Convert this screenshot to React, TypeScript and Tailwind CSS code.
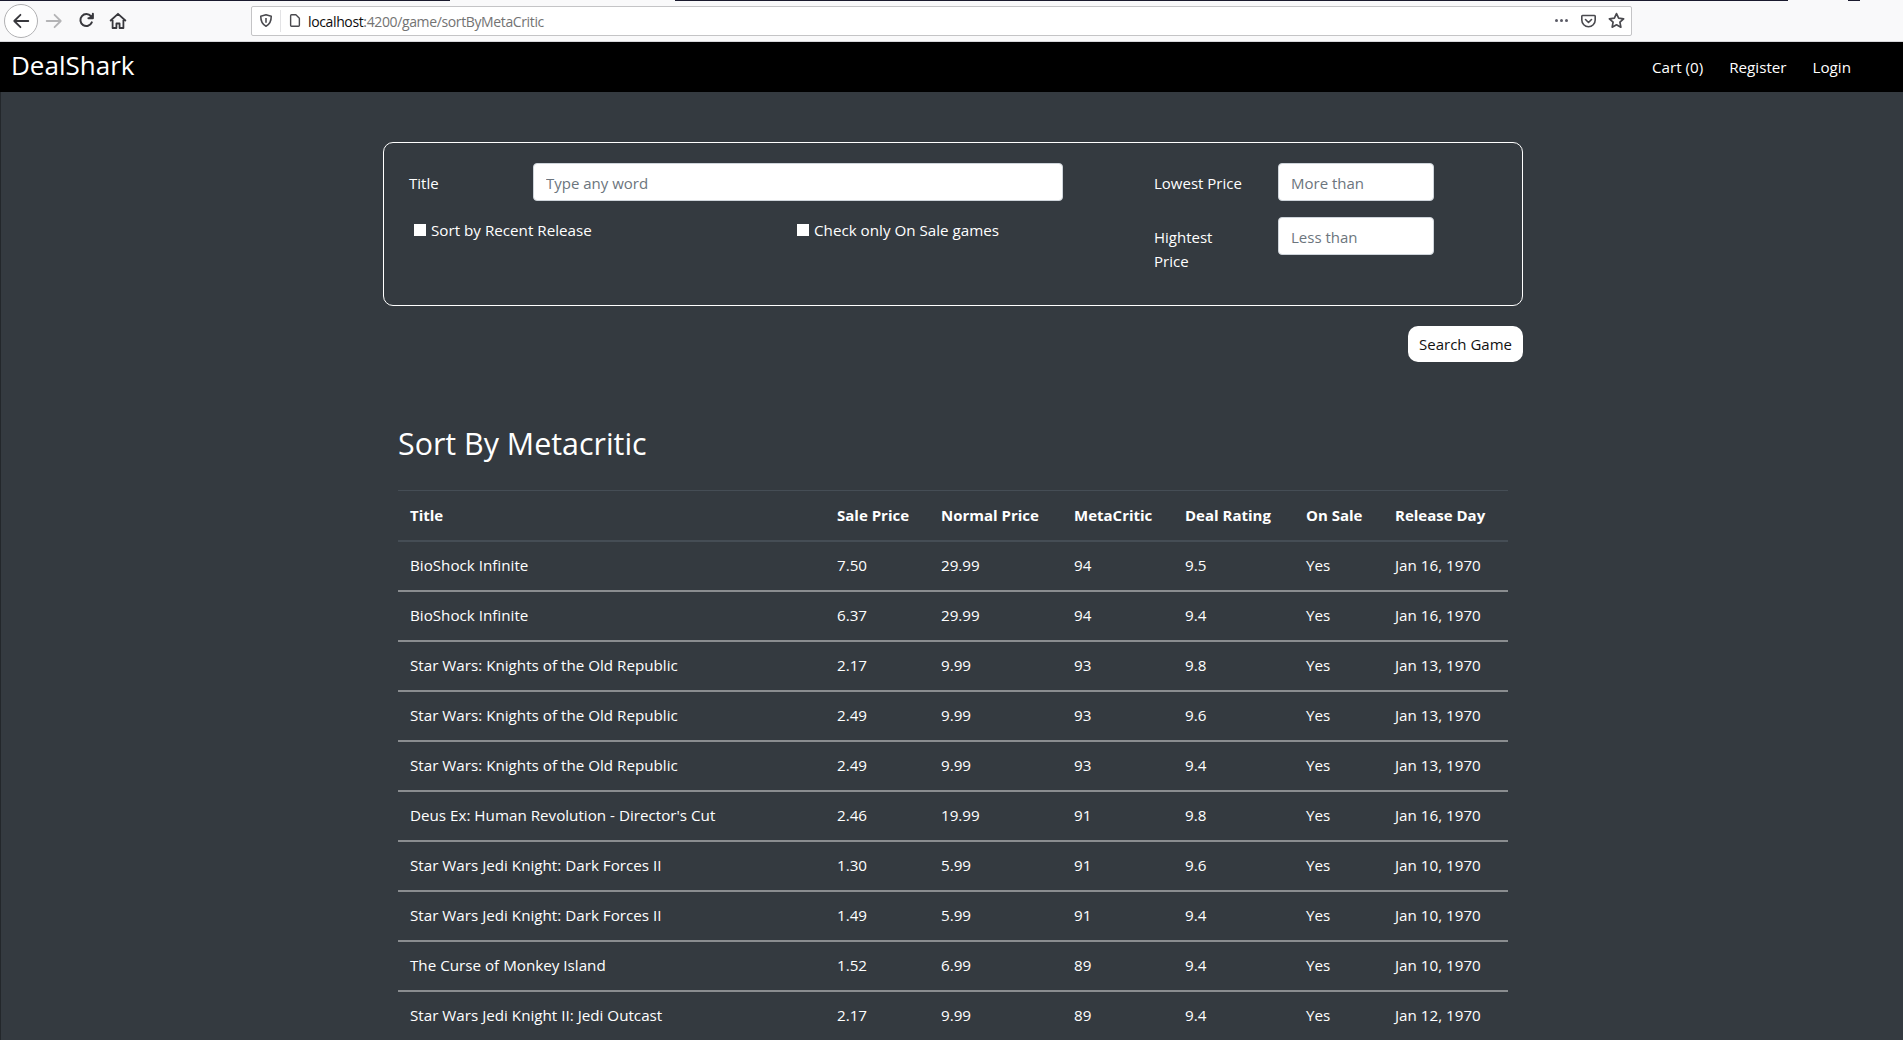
const columns = ["Title", "Sale Price", "Normal Price", "MetaCritic", "Deal Rating", "On Sale", "Release Day"];

const games = [
  ["BioShock Infinite", "7.50", "29.99", "94", "9.5", "Yes", "Jan 16, 1970"],
  ["BioShock Infinite", "6.37", "29.99", "94", "9.4", "Yes", "Jan 16, 1970"],
  ["Star Wars: Knights of the Old Republic", "2.17", "9.99", "93", "9.8", "Yes", "Jan 13, 1970"],
  ["Star Wars: Knights of the Old Republic", "2.49", "9.99", "93", "9.6", "Yes", "Jan 13, 1970"],
  ["Star Wars: Knights of the Old Republic", "2.49", "9.99", "93", "9.4", "Yes", "Jan 13, 1970"],
  ["Deus Ex: Human Revolution - Director's Cut", "2.46", "19.99", "91", "9.8", "Yes", "Jan 16, 1970"],
  ["Star Wars Jedi Knight: Dark Forces II", "1.30", "5.99", "91", "9.6", "Yes", "Jan 10, 1970"],
  ["Star Wars Jedi Knight: Dark Forces II", "1.49", "5.99", "91", "9.4", "Yes", "Jan 10, 1970"],
  ["The Curse of Monkey Island", "1.52", "6.99", "89", "9.4", "Yes", "Jan 10, 1970"],
  ["Star Wars Jedi Knight II: Jedi Outcast", "2.17", "9.99", "89", "9.4", "Yes", "Jan 12, 1970"],
];

function BrowserBar() {
  return (
    <div className="h-[42px] bg-[#f9f9fa] border-b border-[#d7d7db] flex items-center relative shrink-0">
      {/* window edge showing above the toolbar */}
      <div className="absolute top-0 left-0 w-[450px] h-px bg-[#1a1a2e]" />
      <div className="absolute top-0 left-[675px] w-[1113px] h-px bg-[#1a1a2e]" />
      <div className="absolute top-0 left-[1848px] w-3 h-px bg-[#1a1a2e]" />

      <div className="ml-1 w-[34px] h-[34px] rounded-full border border-[#b1b1b3] bg-white flex items-center justify-center">
        <svg width="18" height="18" viewBox="0 0 16 16" fill="none" stroke="#38383d" strokeWidth="1.6" strokeLinecap="round" strokeLinejoin="round">
          <path d="M14.5 8H2M7.5 2.5 2 8l5.5 5.5" />
        </svg>
      </div>
      <svg className="ml-[7px]" width="18" height="18" viewBox="0 0 16 16" fill="none" stroke="#b4b4b6" strokeWidth="1.6" strokeLinecap="round" strokeLinejoin="round">
        <path d="M1.5 8H14M8.5 2.5 14 8l-5.5 5.5" />
      </svg>
      <svg className="ml-[15px]" width="17" height="17" viewBox="0 0 16 16" fill="none" stroke="#38383d" strokeWidth="1.9" strokeLinecap="round" strokeLinejoin="round">
        <path d="M13 9.8A5.6 5.6 0 1 1 12.2 4" />
        <path d="M14 1.6v4.2H9.8" fill="#38383d" />
      </svg>
      <svg className="ml-[14px]" width="18" height="18" viewBox="0 0 16 16" fill="none" stroke="#38383d" strokeWidth="1.6" strokeLinejoin="round">
        <path d="M1 8 8 1.6 15 8M3.2 7v7.2h3.4v-4h2.8v4h3.4V7" />
      </svg>

      <div className="ml-[124px] w-[1381px] h-[30px] bg-white border border-[#c4c4c6] rounded-[2px] flex items-center font-['Open_Sans',sans-serif]">
        <svg className="ml-[7px]" width="14" height="15" viewBox="0 0 16 16" fill="none" stroke="#4a4a4f" strokeWidth="1.8" strokeLinejoin="round">
          <path d="M2 3.2 8 1.5l6 1.7c0 6-1.6 9.3-6 11.3C3.6 12.500 2 9.200 2 3.200Z" />
          <path d="M8 5v5.500" />
        </svg>
        <div className="ml-[7px] w-px h-[22px] bg-[#e3e3e5]" />
        <svg className="ml-[7px]" width="14" height="15" viewBox="0 0 16 16" fill="none" stroke="#4a4a4f" strokeWidth="1.6" strokeLinejoin="round">
          <path d="M3 2.500a1 1 0 0 1 1-1h5l4 4v8a1 1 0 0 1-1 1H4a1 1 0 0 1-1-1Z" />
        </svg>
        <span className="ml-[6px] pt-px text-[14px] tracking-[-0.37px] text-[#0c0c0d]">
          localhost<span className="text-[#737373]">:4200/game/sortByMetaCritic</span>
        </span>
        <div className="ml-auto flex items-center mr-[6px]">
          <span className="flex gap-[2px]">
            <i className="w-[3px] h-[3px] rounded-full bg-[#5b5b66]" />
            <i className="w-[3px] h-[3px] rounded-full bg-[#5b5b66]" />
            <i className="w-[3px] h-[3px] rounded-full bg-[#5b5b66]" />
          </span>
          <svg className="ml-3" width="17" height="16" viewBox="0 0 16 16" fill="none" stroke="#4a4a4f" strokeWidth="1.6" strokeLinecap="round" strokeLinejoin="round">
            <path d="M2 2.500h12a.7.7 0 0 1 .7.7V7A6.700 6.700 0 0 1 1.300 7V3.200a.7.7 0 0 1 .7-.7Z" />
            <path d="m5 6.500 3 3 3-3" />
          </svg>
          <svg className="ml-[11px]" width="17" height="17" viewBox="0 0 16 16" fill="none" stroke="#4a4a4f" strokeWidth="1.6" strokeLinejoin="round">
            <path d="m8 1.500 2 4.300 4.700.6-3.500 3.200.9 4.700L8 12l-4.100 2.300.9-4.700L1.300 6.400 6 5.800Z" />
          </svg>
        </div>
      </div>
    </div>
  );
}

function Navbar() {
  return (
    <nav className="h-[50px] bg-black flex items-center justify-between pl-[11px] pr-[52px] shrink-0">
      <span className="text-[26px] text-white pb-1">DealShark</span>
      <ul className="flex gap-[26px] text-[15.2px] text-white">
        <li>Cart (0)</li>
        <li>Register</li>
        <li>Login</li>
      </ul>
    </nav>
  );
}

function SearchForm() {
  return (
    <div className="w-[1140px] ml-[382px]">
      <div className="h-[164px] border border-white rounded-[10px] pl-[25px] pt-5 flex">
        <div className="w-[654px] mr-[91px]">
          <div className="flex items-center h-[38px]">
            <label className="w-[124px] pt-[2px]">Title</label>
            <input
              placeholder="Type any word"
              className="w-[530px] h-[38px] pt-px bg-white rounded-[4px] border border-[#ced4da] px-3 placeholder:text-[#6c757d] outline-none"
            />
          </div>
          <div className="flex mt-[17px] h-6 items-center text-[15.2px]">
            <label className="w-[388px] flex items-center pl-[5px]">
              <span className="w-3 h-3 bg-white mr-[5px]" />
              Sort by Recent Release
            </label>
            <label className="flex items-center">
              <span className="w-3 h-3 bg-white mr-[5px]" />
              Check only On Sale games
            </label>
          </div>
        </div>
        <div>
          <div className="flex items-center h-[38px]">
            <label className="w-[124px] pt-[2px]">Lowest Price</label>
            <input
              placeholder="More than"
              className="w-[156px] h-[38px] pt-px bg-white rounded-[4px] border border-[#ced4da] px-3 placeholder:text-[#6c757d] outline-none"
            />
          </div>
          <div className="flex mt-4">
            <label className="w-[124px] leading-6 pt-2">
              Hightest
              <br />
              Price
            </label>
            <input
              placeholder="Less than"
              className="w-[156px] h-[38px] pt-px bg-white rounded-[4px] border border-[#ced4da] px-3 placeholder:text-[#6c757d] outline-none"
            />
          </div>
        </div>
      </div>
      <div className="flex justify-end mt-5">
        <button className="w-[115px] h-9 pt-px bg-white text-[#111] rounded-[10px]">Search Game</button>
      </div>
    </div>
  );
}

function GameTable() {
  return (
    <div className="w-[1110px] ml-[397px] mt-[63px]">
      <h2 className="text-[30.4px] leading-[38px] text-white">Sort By Metacritic</h2>
      <table className="w-full table-fixed mt-[27px] border-t border-[#454d55] border-collapse">
        <colgroup>
          <col className="w-[427px]" />
          <col className="w-[104px]" />
          <col className="w-[133px]" />
          <col className="w-[111px]" />
          <col className="w-[121px]" />
          <col className="w-[89px]" />
          <col className="w-[125px]" />
        </colgroup>
        <thead>
          <tr className="h-[50px] border-b-2 border-[#454d55]">
            {columns.map((c) => (
              <th key={c} className="px-3 text-left font-bold whitespace-nowrap">
                {c}
              </th>
            ))}
          </tr>
        </thead>
        <tbody>
          {games.map((g, i) => (
            <tr key={i} className="h-[50px] border-b-2 border-[#8a8d90]">
              {g.map((v, j) => (
                <td key={j} className="px-3 whitespace-nowrap text-[15.2px]">
                  {v}
                </td>
              ))}
            </tr>
          ))}
        </tbody>
      </table>
    </div>
  );
}

export default function App() {
  return (
    <div className="h-screen overflow-hidden flex flex-col bg-[#343a40] text-white text-[15px] font-['Open_Sans',sans-serif]">
      <BrowserBar />
      <Navbar />
      <main className="flex-1 pt-[50px] border-l border-[#23272b]">
        <SearchForm />
        <GameTable />
      </main>
    </div>
  );
}
